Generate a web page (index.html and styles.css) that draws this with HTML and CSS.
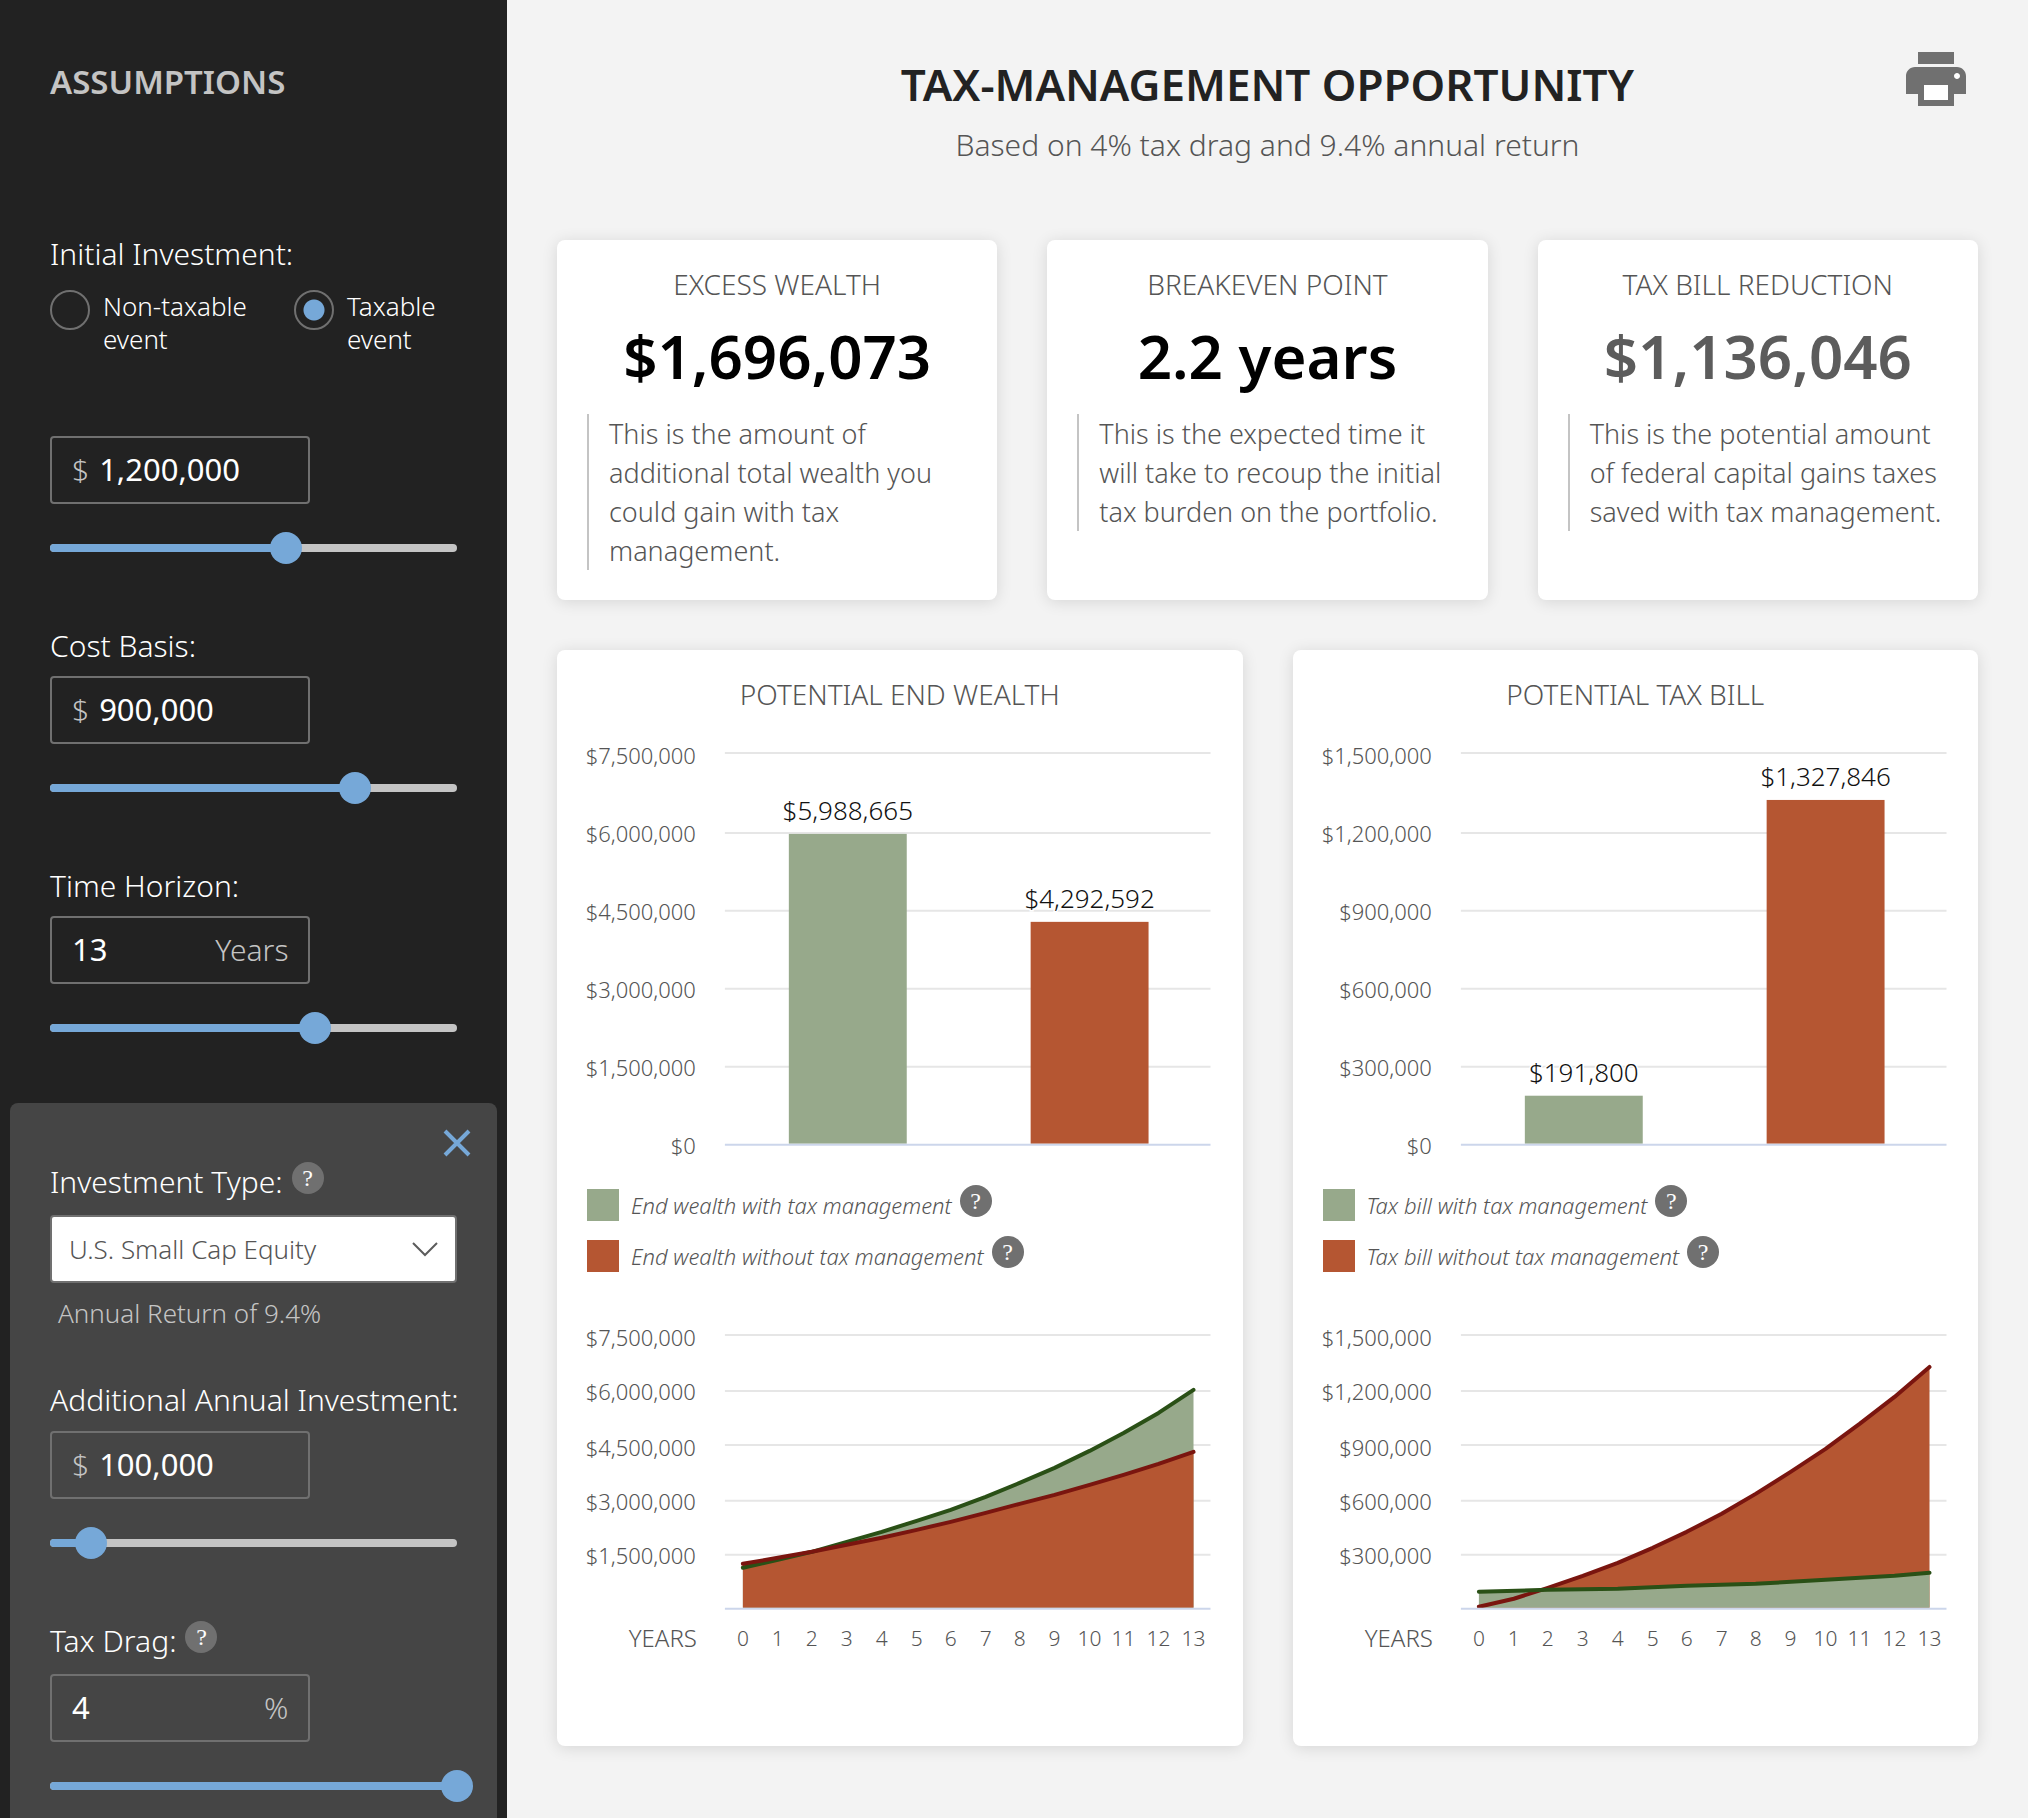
FILE: index.html
```html
<!DOCTYPE html>
<html lang="en">
<head>
  <meta charset="UTF-8" />
  <meta name="viewport" content="width=device-width, initial-scale=1.0"/>
  <title>Tax-Management Opportunity</title>
  <link rel="stylesheet" href="styles.css">
</head>
<body>
  <aside class="sidebar">
    <h2 class="sidebar-title">ASSUMPTIONS</h2>

    <div class="control">
      <label class="control-label" for="investment">Initial Investment:</label>
      <div class="radio-row">
        <label class="radio"><input type="radio" name="event"><span>Non-taxable event</span></label>
        <label class="radio"><input type="radio" name="event" checked><span>Taxable event</span></label>
      </div>
      <div class="field">
        <span class="unit">$</span>
        <input type="text" id="investment" value="1,200,000">
      </div>
      <div class="slider">
        <div class="slider-fill" style="width: 58%"></div>
        <input type="range" min="0" max="100" value="58" aria-label="Initial Investment">
      </div>
    </div>

    <div class="control">
      <label class="control-label" for="basis">Cost Basis:</label>
      <div class="field">
        <span class="unit">$</span>
        <input type="text" id="basis" value="900,000">
      </div>
      <div class="slider">
        <div class="slider-fill" style="width: 75%"></div>
        <input type="range" min="0" max="100" value="75" aria-label="Cost Basis">
      </div>
    </div>

    <div class="control">
      <label class="control-label" for="horizon">Time Horizon:</label>
      <div class="field">
        <input type="text" id="horizon" value="13">
        <span class="unit">Years</span>
      </div>
      <div class="slider">
        <div class="slider-fill" style="width: 65%"></div>
        <input type="range" min="0" max="20" value="13" aria-label="Time Horizon">
      </div>
    </div>

    <div class="panel">
      <button type="button" class="close-btn" aria-label="Close">
        <svg viewBox="0 0 28 28"><path d="M2 2L26 26M26 2L2 26" fill="none" stroke="#76a8d8" stroke-width="4"/></svg>
      </button>

      <div class="control">
        <div class="label-row">
          <label class="control-label" for="type">Investment Type:</label>
          <button type="button" class="help">?</button>
        </div>
        <div class="select-box">
          <select id="type">
            <option>U.S. Small Cap Equity</option>
            <option>U.S. Large Cap Equity</option>
          </select>
          <svg class="chevron" viewBox="0 0 26 16"><path d="M1 2L13 14L25 2" fill="none" stroke="#5c5c5c" stroke-width="2"/></svg>
        </div>
        <p class="note">Annual Return of 9.4%</p>
      </div>

      <div class="control">
        <label class="control-label" for="additional">Additional Annual Investment:</label>
        <div class="field">
          <span class="unit">$</span>
          <input type="text" id="additional" value="100,000">
        </div>
        <div class="slider">
          <div class="slider-fill" style="width: 10%"></div>
          <input type="range" min="0" max="100" value="10" aria-label="Additional Annual Investment">
        </div>
      </div>

      <div class="control">
        <div class="label-row">
          <label class="control-label" for="drag">Tax Drag:</label>
          <button type="button" class="help">?</button>
        </div>
        <div class="field">
          <input type="text" id="drag" value="4">
          <span class="unit">%</span>
        </div>
        <div class="slider">
          <div class="slider-fill" style="width: 100%"></div>
          <input type="range" min="0" max="4" value="4" aria-label="Tax Drag">
        </div>
      </div>
    </div>
  </aside>

  <main class="content">
    <header class="page-header">
      <div class="heading">
        <h1>TAX-MANAGEMENT OPPORTUNITY</h1>
        <p>Based on 4% tax drag and 9.4% annual return</p>
      </div>
      <button type="button" class="print-btn" aria-label="Print">
        <svg viewBox="2 3 20 18">
          <path fill="#fff" d="M7 13h10v7H7zM17.500 9.500h3v3h-3z"/>
          <path fill="#707070" d="M19 8H5c-1.660 0-3 1.340-3 3v6h4v4h12v-4h4v-6c0-1.660-1.340-3-3-3zm-3 11H8v-5h8v5zm3-7c-.55 0-1-.45-1-1s.45-1 1-1 1 .45 1 1-.45 1-1 1zm-1-9H6v4h12V3z"/>
        </svg>
      </button>
    </header>

    <section class="stats">
      <div class="card">
        <h3>EXCESS WEALTH</h3>
        <div class="value">$1,696,073</div>
        <p class="blurb">This is the amount of additional total wealth you could gain with tax management.</p>
      </div>
      <div class="card">
        <h3>BREAKEVEN POINT</h3>
        <div class="value">2.2 years</div>
        <p class="blurb">This is the expected time it will take to recoup the initial tax burden on the portfolio.</p>
      </div>
      <div class="card">
        <h3>TAX BILL REDUCTION</h3>
        <div class="value muted">$1,136,046</div>
        <p class="blurb">This is the potential amount of federal capital gains taxes saved with tax management.</p>
      </div>
    </section>

    <section class="charts">
      <div class="card chart-card">
        <h3>POTENTIAL END WEALTH</h3>
        <svg class="bar-chart" viewBox="0 0 626 430">
          <path class="grid" d="M138 13H624M138 93H624M138 171H624M138 249H624M138 327H624"/>
          <rect class="with" x="202" y="94" width="118" height="310"/>
          <rect class="without" x="444" y="182" width="118" height="222"/>
          <path class="axis" d="M138 405H624"/>
          <g class="y-labels">
            <text x="109" y="24">$7,500,000</text>
            <text x="109" y="102">$6,000,000</text>
            <text x="109" y="180">$4,500,000</text>
            <text x="109" y="258">$3,000,000</text>
            <text x="109" y="336">$1,500,000</text>
            <text x="109" y="414">$0</text>
          </g>
          <g class="bar-labels">
            <text x="261" y="80">$5,988,665</text>
            <text x="503" y="168">$4,292,592</text>
          </g>
        </svg>

        <ul class="legend">
          <li><span class="swatch green"></span>End wealth with tax management<button type="button" class="help">?</button></li>
          <li><span class="swatch orange"></span>End wealth without tax management<button type="button" class="help">?</button></li>
        </ul>

        <svg class="area-chart" viewBox="0 0 626 340">
          <path class="grid" d="M138 14H624M138 70H624M138 124H624M138 180H624M138 234H624"/>
          <path class="with" d="M156 247L191 239L225 231L260 221L295 211L330 200L364 189L399 176L433 162L468 147L503 130L537 112L572 92L607 69V287H156z"/>
          <path class="without" d="M156 243L191 237L225 231L260 224L295 217L330 209L364 201L399 192L433 183L468 174L503 164L537 154L572 143L607 131V287H156z"/>
          <path class="with-line" d="M156 247L191 239L225 231L260 221L295 211L330 200L364 189L399 176L433 162L468 147L503 130L537 112L572 92L607 69"/>
          <path class="without-line" d="M156 243L191 237L225 231L260 224L295 217L330 209L364 201L399 192L433 183L468 174L503 164L537 154L572 143L607 131"/>
          <path class="axis" d="M138 288H624"/>
          <g class="y-labels">
            <text x="109" y="25">$7,500,000</text>
            <text x="109" y="79">$6,000,000</text>
            <text x="109" y="135">$4,500,000</text>
            <text x="109" y="189">$3,000,000</text>
            <text x="109" y="243">$1,500,000</text>
            <text class="x-title" x="110" y="326">YEARS</text>
          </g>
          <g class="x-labels">
            <text x="156" y="325">0</text>
            <text x="191" y="325">1</text>
            <text x="225" y="325">2</text>
            <text x="260" y="325">3</text>
            <text x="295" y="325">4</text>
            <text x="330" y="325">5</text>
            <text x="364" y="325">6</text>
            <text x="399" y="325">7</text>
            <text x="433" y="325">8</text>
            <text x="468" y="325">9</text>
            <text x="503" y="325">10</text>
            <text x="537" y="325">11</text>
            <text x="572" y="325">12</text>
            <text x="607" y="325">13</text>
          </g>
        </svg>
      </div>

      <div class="card chart-card">
        <h3>POTENTIAL TAX BILL</h3>
        <svg class="bar-chart" viewBox="0 0 626 430">
          <path class="grid" d="M138 13H624M138 93H624M138 171H624M138 249H624M138 327H624"/>
          <rect class="with" x="202" y="356" width="118" height="48"/>
          <rect class="without" x="444" y="60" width="118" height="344"/>
          <path class="axis" d="M138 405H624"/>
          <g class="y-labels">
            <text x="109" y="24">$1,500,000</text>
            <text x="109" y="102">$1,200,000</text>
            <text x="109" y="180">$900,000</text>
            <text x="109" y="258">$600,000</text>
            <text x="109" y="336">$300,000</text>
            <text x="109" y="414">$0</text>
          </g>
          <g class="bar-labels">
            <text x="261" y="342">$191,800</text>
            <text x="503" y="46">$1,327,846</text>
          </g>
        </svg>

        <ul class="legend">
          <li><span class="swatch green"></span>Tax bill with tax management<button type="button" class="help">?</button></li>
          <li><span class="swatch orange"></span>Tax bill without tax management<button type="button" class="help">?</button></li>
        </ul>

        <svg class="area-chart" viewBox="0 0 626 340">
          <path class="grid" d="M138 14H624M138 70H624M138 124H624M138 180H624M138 234H624"/>
          <path class="without" d="M156 286L191 278L225 267L260 255L295 242L330 227L364 211L399 193L433 173L468 151L503 128L537 103L572 76L607 46V287H156z"/>
          <path class="with" d="M156 271L225 269L295 268L364 265L433 263L503 259L572 255L607 252V287H156z"/>
          <path class="without-line" d="M156 286L191 278L225 267L260 255L295 242L330 227L364 211L399 193L433 173L468 151L503 128L537 103L572 76L607 46"/>
          <path class="with-line" d="M156 271L225 269L295 268L364 265L433 263L503 259L572 255L607 252"/>
          <path class="axis" d="M138 288H624"/>
          <g class="y-labels">
            <text x="109" y="25">$1,500,000</text>
            <text x="109" y="79">$1,200,000</text>
            <text x="109" y="135">$900,000</text>
            <text x="109" y="189">$600,000</text>
            <text x="109" y="243">$300,000</text>
            <text class="x-title" x="110" y="326">YEARS</text>
          </g>
          <g class="x-labels">
            <text x="156" y="325">0</text>
            <text x="191" y="325">1</text>
            <text x="225" y="325">2</text>
            <text x="260" y="325">3</text>
            <text x="295" y="325">4</text>
            <text x="330" y="325">5</text>
            <text x="364" y="325">6</text>
            <text x="399" y="325">7</text>
            <text x="433" y="325">8</text>
            <text x="468" y="325">9</text>
            <text x="503" y="325">10</text>
            <text x="537" y="325">11</text>
            <text x="572" y="325">12</text>
            <text x="607" y="325">13</text>
          </g>
        </svg>
      </div>
    </section>
  </main>
</body>
</html>
```
FILE: styles.css
```css
* {
  margin: 0;
  padding: 0;
  box-sizing: border-box;
}

body {
  display: flex;
  min-height: 100vh;
  background: #f3f3f3;
  color: #555;
  font-family: 'Noto Sans', 'Open Sans', sans-serif;
  font-weight: 300;
}

button,
input,
select {
  font: inherit;
  border: none;
  background: none;
}

button {
  cursor: pointer;
}

svg {
  display: block;
  overflow: visible;
}

/* sidebar */
.sidebar {
  display: flex;
  flex-direction: column;
  width: 25%;
  padding: 62px 50px 0;
  background: #222;
  color: #fff;
}

.sidebar-title {
  margin-bottom: 132px;
  font-size: 33px;
  font-weight: 600;
  line-height: 40px;
  color: #c4c4c4;
}

.control {
  margin-bottom: 74px;
}

.control-label {
  display: block;
  margin-bottom: 10px;
  font-size: 30px;
  line-height: 40px;
  white-space: nowrap;
}

.label-row {
  display: flex;
  align-items: flex-start;
  gap: 9px;
  margin-bottom: 2px;
}

.radio-row {
  display: flex;
  justify-content: space-between;
  margin: 16px 0 80px;
}

.radio {
  display: flex;
  gap: 13px;
  width: 200px;
  font-size: 26px;
  line-height: 33px;
}

.radio + .radio {
  width: 163px;
}

.radio input {
  appearance: none;
  flex: none;
  width: 40px;
  height: 40px;
  border: 2px solid #707070;
  border-radius: 50%;
}

.radio input:checked {
  background: radial-gradient(circle, #76a8d8 10px, transparent 11px);
}

.field {
  display: flex;
  align-items: center;
  gap: 10px;
  width: 64%;
  height: 68px;
  padding: 0 20px 2px;
  border: 2px solid #707070;
  border-radius: 4px;
  font-size: 30px;
}

.field input {
  flex: 1;
  min-width: 0;
  color: #fff;
  font-size: 31px;
  font-weight: 400;
}

.unit {
  color: #c4c4c4;
}

.slider {
  height: 8px;
  margin-top: 40px;
  border-radius: 4px;
  background: #c4c4c4;
}

.slider-fill {
  height: 8px;
  border-radius: 4px;
  background: #76a8d8;
}

/* the thumb may hang over both ends of the track */
.slider input {
  appearance: none;
  display: block;
  width: calc(100% + 32px);
  height: 32px;
  margin: -20px -16px 0;
}

.slider input::-webkit-slider-thumb {
  appearance: none;
  width: 32px;
  height: 32px;
  border-radius: 50%;
  background: #76a8d8;
}

.panel {
  display: flex;
  flex-direction: column;
  flex: 1;
  margin: -3px -40px 0;
  padding: 26px 40px 0;
  border-radius: 8px 8px 0 0;
  background: #454545;
}

.panel .control-label {
  margin-bottom: 11px;
}

.panel .control:nth-child(2) {
  margin-bottom: 47px;
}

.panel .control:last-child {
  margin-bottom: 17px;
}

.close-btn {
  align-self: flex-end;
  width: 28px;
  height: 28px;
  margin: 0 -14px 5px 0;
}

.help {
  flex: none;
  width: 32px;
  height: 32px;
  border-radius: 50%;
  background: #707070;
  color: #fff;
  font-family: 'Liberation Serif', serif;
  font-size: 24px;
  font-style: normal;
  line-height: 32px;
  text-align: center;
}

.select-box {
  display: grid;
  align-items: center;
}

.select-box select,
.chevron {
  grid-area: 1 / 1;
}

.select-box select {
  appearance: none;
  height: 68px;
  padding: 0 17px;
  border: 2px solid #707070;
  border-radius: 4px;
  background: #fff;
  color: #555;
  font-size: 26px;
}

.chevron {
  justify-self: end;
  width: 26px;
  height: 16px;
  margin-right: 19px;
  pointer-events: none;
}

.note {
  margin: 10px 8px 0;
  color: #c4c4c4;
  font-size: 26px;
  line-height: 40px;
}

/* main column */
.content {
  flex: 1;
  min-width: 0;
  padding: 52px 50px 50px;
}

.page-header {
  display: grid;
  grid-template-columns: 1fr auto 1fr;
  align-items: start;
  margin-bottom: 75px;
}

.heading {
  grid-column: 2;
  text-align: center;
}

.heading h1 {
  margin-bottom: 9px;
  color: #222;
  font-size: 44px;
  font-weight: 600;
  line-height: 64px;
}

.heading p {
  font-size: 30px;
  line-height: 40px;
}

.print-btn {
  justify-self: end;
  width: 60px;
  height: 54px;
  margin-right: 12px;
}

.card {
  padding: 24px 30px 30px;
  border-radius: 8px;
  background: #fff;
  box-shadow: 0 2px 16px rgba(0, 0, 0, 0.12);
}

.card h3 {
  font-size: 28px;
  font-weight: 300;
  line-height: 40px;
  text-align: center;
}

.stats {
  display: grid;
  grid-template-columns: repeat(3, 1fr);
  gap: 50px;
  margin-bottom: 50px;
}

.value {
  margin: 12px 0 18px;
  color: #000;
  font-size: 60px;
  font-weight: 600;
  line-height: 80px;
  text-align: center;
}

.value.muted {
  color: #5c5c5c;
}

.blurb {
  padding-left: 20px;
  border-left: 2px solid #c4c4c4;
  font-size: 27px;
  line-height: 39px;
}

.charts {
  display: grid;
  grid-template-columns: repeat(2, 1fr);
  gap: 50px;
}

.chart-card {
  padding-bottom: 86px;
}

.bar-chart {
  width: 100%;
  margin-top: 26px;
}

.area-chart {
  width: 100%;
  margin-top: 49px;
}

.grid {
  stroke: #e6e6e6;
  stroke-width: 2;
}

.axis {
  stroke: #ccd6eb;
  stroke-width: 2;
}

.with {
  fill: #97a98b;
}

.without {
  fill: #b55632;
}

.with-line,
.without-line {
  fill: none;
  stroke: #2a5016;
  stroke-width: 4;
  stroke-linejoin: round;
  stroke-linecap: round;
}

.without-line {
  stroke: #7a150f;
}

.y-labels {
  fill: #555;
  font-size: 22px;
  text-anchor: end;
}

.x-labels {
  fill: #555;
  font-size: 21px;
  text-anchor: middle;
}

.x-title {
  font-size: 24px;
}

.bar-labels {
  fill: #111;
  stroke: #fff;
  stroke-width: 3;
  paint-order: stroke;
  font-size: 26px;
  text-anchor: middle;
}

.legend {
  display: flex;
  flex-direction: column;
  gap: 19px;
  margin-top: 19px;
  list-style: none;
  font-size: 22px;
  font-style: italic;
}

.legend li {
  display: flex;
  align-items: center;
  height: 32px;
}

.swatch {
  width: 32px;
  height: 32px;
  margin-right: 12px;
}

.green {
  background: #97a98b;
}

.orange {
  background: #b55632;
}

.legend .help {
  margin: -8px 0 0 8px;
}
```
